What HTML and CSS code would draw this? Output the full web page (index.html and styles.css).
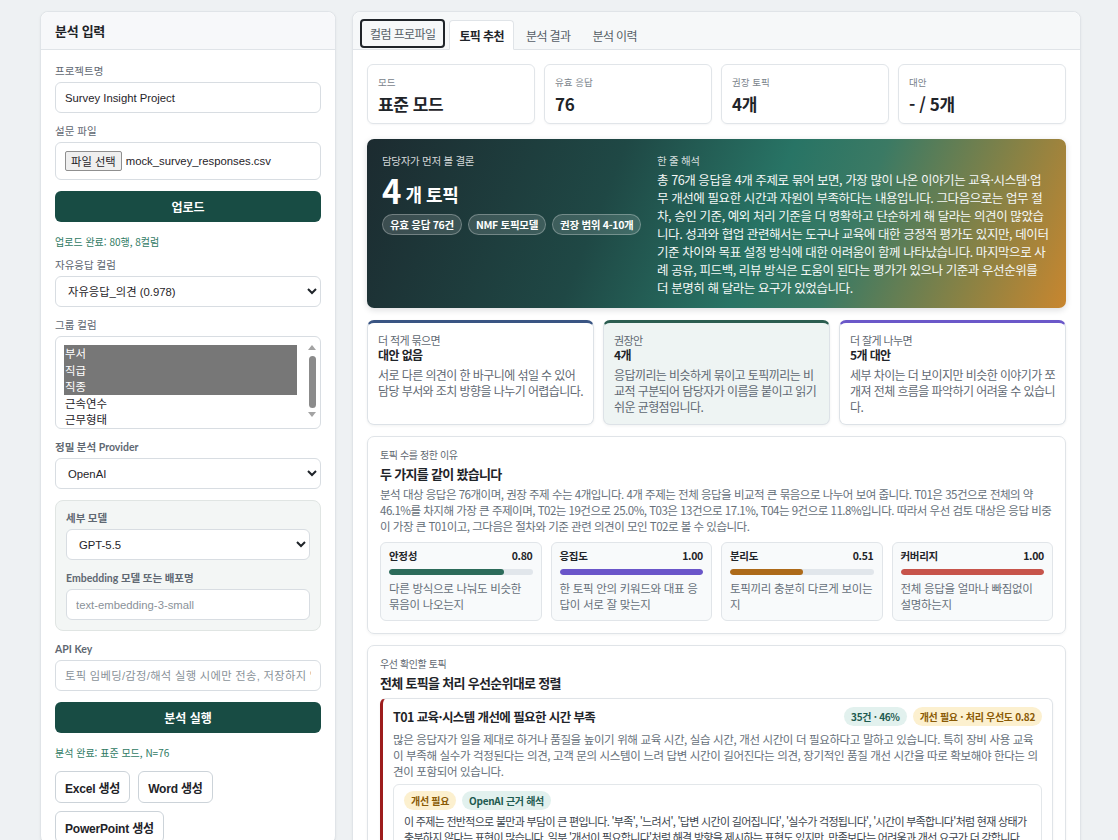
FILE: index.html
```html
<!DOCTYPE html>
<html lang="ko">
<head>
    <meta charset="UTF-8">
    <meta name="viewport" content="width=device-width, initial-scale=1.0">
    <title>Survey Insight</title>
    <link rel="stylesheet" href="styles.css">
</head>
<body>
<div class="app">
    <aside class="panel side">
        <div class="panel-head">분석 입력</div>
        <div class="side-body">
            <div class="field">
                <label class="field-label">프로젝트명</label>
                <input class="input" type="text" value="Survey Insight Project">
            </div>
            <div class="field">
                <label class="field-label">설문 파일</label>
                <div class="file-box">
                    <span class="file-btn">파일 선택</span>
                    <span class="file-name">mock_survey_responses.csv</span>
                </div>
            </div>
            <button class="btn-primary">업로드</button>
            <p class="status">업로드 완료: 80행, 8컬럼</p>
            <div class="field">
                <label class="field-label">자유응답 컬럼</label>
                <select class="input select">
                    <option>자유응답_의견 (0.978)</option>
                </select>
            </div>
            <div class="field">
                <label class="field-label">그룹 컬럼</label>
                <div class="input listbox" role="listbox">
                    <div class="list-items">
                        <div class="list-item selected">부서</div>
                        <div class="list-item selected">직급</div>
                        <div class="list-item selected">직종</div>
                        <div class="list-item">근속연수</div>
                        <div class="list-item">근무형태</div>
                    </div>
                    <div class="scroll-track">
                        <span class="arrow up"></span>
                        <span class="thumb"></span>
                        <span class="arrow down"></span>
                    </div>
                </div>
            </div>
            <div class="field">
                <label class="field-label strong">정밀 분석 Provider</label>
                <select class="input select">
                    <option>OpenAI</option>
                </select>
            </div>
            <div class="sub-box">
                <div class="field">
                    <label class="field-label strong">세부 모델</label>
                    <select class="input select">
                        <option>GPT-5.5</option>
                    </select>
                </div>
                <div class="field">
                    <label class="field-label strong">Embedding 모델 또는 배포명</label>
                    <input class="input" type="text" placeholder="text-embedding-3-small">
                </div>
            </div>
            <div class="field">
                <label class="field-label strong">API Key</label>
                <input class="input key" type="text" placeholder="토픽 임베딩/감정/해석 실행 시에만 전송, 저장하지 않음">
            </div>
            <button class="btn-primary">분석 실행</button>
            <p class="status">분석 완료: 표준 모드, N=76</p>
            <div class="export-row">
                <button class="btn-light">Excel 생성</button>
                <button class="btn-light">Word 생성</button>
                <button class="btn-light">PowerPoint 생성</button>
            </div>
        </div>
    </aside>

    <main class="panel main">
        <nav class="tabs">
            <span class="tab focused">컬럼 프로파일</span>
            <span class="tab active">토픽 추천</span>
            <span class="tab">분석 결과</span>
            <span class="tab">분석 이력</span>
        </nav>

        <div class="main-body">
            <div class="stats">
                <div class="stat"><span class="stat-label">모드</span><strong class="stat-value">표준 모드</strong></div>
                <div class="stat"><span class="stat-label">유효 응답</span><strong class="stat-value">76</strong></div>
                <div class="stat"><span class="stat-label">권장 토픽</span><strong class="stat-value">4개</strong></div>
                <div class="stat"><span class="stat-label">대안</span><strong class="stat-value">- / 5개</strong></div>
            </div>

            <section class="hero">
                <div class="hero-left">
                    <p class="hero-label">담당자가 먼저 볼 결론</p>
                    <p class="hero-count"><span class="big">4</span> 개 토픽</p>
                    <div class="pills">
                        <span class="pill">유효 응답 76건</span>
                        <span class="pill">NMF 토픽모델</span>
                        <span class="pill">권장 범위 4-10개</span>
                    </div>
                </div>
                <div class="hero-right">
                    <p class="hero-label">한 줄 해석</p>
                    <p class="hero-text">총 76개 응답을 4개 주제로 묶어 보면, 가장 많이 나온 이야기는 교육·시스템·업무 개선에 필요한 시간과 자원이 부족하다는 내용입니다. 그다음으로는 업무 절차, 승인 기준, 예외 처리 기준을 더 명확하고 단순하게 해 달라는 의견이 많았습니다. 성과와 협업 관련해서는 도구나 교육에 대한 긍정적 평가도 있지만, 데이터 기준 차이와 목표 설정 방식에 대한 어려움이 함께 나타났습니다. 마지막으로 사례 공유, 피드백, 리뷰 방식은 도움이 된다는 평가가 있으나 기준과 우선순위를 더 분명히 해 달라는 요구가 있었습니다.</p>
                </div>
            </section>

            <div class="options">
                <div class="option fewer">
                    <p class="option-label">더 적게 묶으면</p>
                    <p class="option-title">대안 없음</p>
                    <p class="option-text">서로 다른 의견이 한 바구니에 섞일 수 있어 담당 부서와 조치 방향을 나누기 어렵습니다.</p>
                </div>
                <div class="option pick">
                    <p class="option-label">권장안</p>
                    <p class="option-title">4개</p>
                    <p class="option-text">응답끼리는 비슷하게 묶이고 토픽끼리는 비교적 구분되어 담당자가 이름을 붙이고 읽기 쉬운 균형점입니다.</p>
                </div>
                <div class="option more">
                    <p class="option-label">더 잘게 나누면</p>
                    <p class="option-title">5개 대안</p>
                    <p class="option-text">세부 차이는 더 보이지만 비슷한 이야기가 쪼개져 전체 흐름을 파악하기 어려울 수 있습니다.</p>
                </div>
            </div>

            <section class="card">
                <p class="card-label">토픽 수를 정한 이유</p>
                <h3 class="card-title">두 가지를 같이 봤습니다</h3>
                <p class="card-text">분석 대상 응답은 76개이며, 권장 주제 수는 4개입니다. 4개 주제는 전체 응답을 비교적 큰 묶음으로 나누어 보여 줍니다. T01은 35건으로 전체의 약 46.1%를 차지해 가장 큰 주제이며, T02는 19건으로 25.0%, T03은 13건으로 17.1%, T04는 9건으로 11.8%입니다. 따라서 우선 검토 대상은 응답 비중이 가장 큰 T01이고, 그다음은 절차와 기준 관련 의견이 모인 T02로 볼 수 있습니다.</p>
                <div class="metrics">
                    <div class="metric">
                        <div class="metric-head"><span>안정성</span><span>0.80</span></div>
                        <div class="bar"><div class="fill green" style="width: 80%"></div></div>
                        <p class="metric-text">다른 방식으로 나눠도 비슷한 묶음이 나오는지</p>
                    </div>
                    <div class="metric">
                        <div class="metric-head"><span>응집도</span><span>1.00</span></div>
                        <div class="bar"><div class="fill purple" style="width: 100%"></div></div>
                        <p class="metric-text">한 토픽 안의 키워드와 대표 응답이 서로 잘 맞는지</p>
                    </div>
                    <div class="metric">
                        <div class="metric-head"><span>분리도</span><span>0.51</span></div>
                        <div class="bar"><div class="fill brown" style="width: 51%"></div></div>
                        <p class="metric-text">토픽끼리 충분히 다르게 보이는지</p>
                    </div>
                    <div class="metric">
                        <div class="metric-head"><span>커버리지</span><span>1.00</span></div>
                        <div class="bar"><div class="fill red" style="width: 100%"></div></div>
                        <p class="metric-text">전체 응답을 얼마나 빠짐없이 설명하는지</p>
                    </div>
                </div>
            </section>

            <section class="card">
                <p class="card-label">우선 확인할 토픽</p>
                <h3 class="card-title">전체 토픽을 처리 우선순위대로 정렬</h3>
                <div class="topic">
                    <div class="topic-head">
                        <h4 class="topic-title">T01 교육·시스템 개선에 필요한 시간 부족</h4>
                        <div class="badges">
                            <span class="badge teal">35건 · 46%</span>
                            <span class="badge amber">개선 필요 · 처리 우선도 0.82</span>
                        </div>
                    </div>
                    <p class="topic-text">많은 응답자가 일을 제대로 하거나 품질을 높이기 위해 교육 시간, 실습 시간, 개선 시간이 더 필요하다고 말하고 있습니다. 특히 장비 사용 교육이 부족해 실수가 걱정된다는 의견, 고객 문의 시스템이 느려 답변 시간이 길어진다는 의견, 장기적인 품질 개선 시간을 따로 확보해야 한다는 의견이 포함되어 있습니다.</p>
                    <div class="evidence">
                        <div class="badges">
                            <span class="badge amber">개선 필요</span>
                            <span class="badge teal">OpenAI 근거 해석</span>
                        </div>
                        <p class="evidence-text">이 주제는 전반적으로 불만과 부담이 큰 편입니다. '부족', '느려서', '답변 시간이 길어집니다', '실수가 걱정됩니다', '시간이 부족합니다'처럼 현재 상태가 충분하지 않다는 표현이 많습니다. 일부 '개선이 필요합니다'처럼 해결 방향을 제시하는 표현도 있지만, 만족보다는 어려움과 개선 요구가 더 강합니다.</p>
                    </div>
                </div>
            </section>
        </div>
    </main>
</div>
</body>
</html>
```

FILE: styles.css
```css
*,
::before,
::after {
  margin: 0;
  padding: 0;
  box-sizing: border-box;
}

body {
  background: #eef1f3;
  font-family: "Noto Sans CJK KR", "Noto Sans", sans-serif;
  color: #1f2429;
  font-size: 12px;
}

.app {
  display: grid;
  grid-template-columns: 296px 729px;
  gap: 16px;
  padding: 11px 0 0 40px;
  align-items: start;
}

.panel {
  background: #fff;
  border: 1px solid #e0e4e8;
  border-radius: 8px;
  box-shadow: 0 1px 3px rgba(20, 30, 40, 0.05);
}

/* left column */
.panel-head {
  height: 38px;
  padding: 0 14px;
  display: flex;
  align-items: center;
  background: #f7f8fa;
  border-bottom: 1px solid #e0e4e8;
  border-radius: 8px 8px 0 0;
  font-size: 13px;
  font-weight: 700;
  letter-spacing: -0.3px;
}

.side-body {
  padding: 14px 14px 0;
  display: flex;
  flex-direction: column;
  gap: 11px;
}

.field {
  display: flex;
  flex-direction: column;
}

.field-label {
  font-size: 10.5px;
  line-height: 14px;
  margin-bottom: 4px;
  color: #5f6872;
}

.field-label.strong {
  font-family: "Lato", "Noto Sans CJK KR", sans-serif;
  font-weight: 700;
}

.input {
  height: 31px;
  width: 100%;
  border: 1px solid #d8dde2;
  border-radius: 6px;
  background: #fff;
  padding: 0 9px;
  font-family: "Liberation Sans", "Noto Sans CJK KR", sans-serif;
  font-size: 11.3px;
  color: #1f2429;
}

.input::placeholder {
  color: #8a9299;
}

.input.key::placeholder {
  letter-spacing: 0.3px;
}

.select {
  padding-left: 8px;
}

/* multi-select list with its scrollbar */
.listbox {
  height: 93px;
  padding: 8px 3px 8px 8px;
  display: flex;
  gap: 10px;
  font-family: "Noto Sans CJK KR", sans-serif;
  font-size: 11.4px;
  overflow: hidden;
}

.list-items {
  flex: 1;
}

.list-item {
  line-height: 16.5px;
  padding: 0 1px;
}

.list-item.selected {
  background: #777;
  color: #fff;
}

.scroll-track {
  width: 10px;
  display: flex;
  flex-direction: column;
  align-items: center;
  margin-top: -3px;
}

.arrow {
  width: 0;
  height: 0;
  border-left: 4px solid transparent;
  border-right: 4px solid transparent;
  margin: 3px 0;
}

.arrow.up {
  border-bottom: 5px solid #a3a3a3;
}

.arrow.down {
  border-top: 5px solid #a3a3a3;
  margin-top: auto;
}

.thumb {
  width: 7px;
  height: 52px;
  margin-top: 3px;
  border-radius: 4px;
  background: #8b8b8b;
}

.file-box {
  height: 38px;
  border: 1px solid #d8dde2;
  border-radius: 6px;
  display: flex;
  align-items: center;
  padding: 0 9px;
  font-family: "Liberation Sans", "Noto Sans CJK KR", sans-serif;
  font-size: 11.3px;
}

.file-btn {
  background: #efefef;
  border: 1px solid #8f8f8f;
  border-radius: 2px;
  padding: 1px 5px;
  font-family: "Noto Sans CJK KR", sans-serif;
  font-size: 11.3px;
  line-height: 16px;
  margin-right: 4px;
}

.btn-primary {
  height: 31px;
  border: 0;
  border-radius: 6px;
  background: #184c44;
  color: #fff;
  font-family: "Noto Sans CJK KR", sans-serif;
  font-weight: 700;
  font-size: 12px;
}

.status {
  font-size: 10px;
  line-height: 14px;
  color: #2f7a63;
  margin: 2px 0 -2px;
}

.sub-box {
  background: #f3f6f5;
  border: 1px solid #e0e5e3;
  border-radius: 8px;
  padding: 10px;
  display: flex;
  flex-direction: column;
  gap: 11px;
}

.export-row {
  display: flex;
  flex-wrap: wrap;
  gap: 8px;
  margin-top: 2px;
}

.btn-light {
  height: 32px;
  padding: 0 9px;
  background: #fff;
  border: 1px solid #ccd3d9;
  border-radius: 6px;
  font-family: "Liberation Sans", "Noto Sans CJK KR", sans-serif;
  font-weight: 700;
  font-size: 12px;
  letter-spacing: -0.2px;
  color: #1f2429;
}

/* right column */
.tabs {
  height: 38px;
  display: flex;
  align-items: flex-end;
  gap: 2px;
  padding: 0 7px;
  background: #f6f8f9;
  border-bottom: 1px solid #e0e4e8;
  border-radius: 8px 8px 0 0;
}

.tab {
  height: 30px;
  padding: 0 9px;
  display: flex;
  align-items: center;
  font-size: 12px;
  letter-spacing: -0.6px;
  color: #555e66;
  border: 1px solid transparent;
  border-radius: 4px 4px 0 0;
  margin-bottom: -1px;
}

.tab.focused {
  border: 2px solid #1f2429;
  border-radius: 4px;
  margin-bottom: 1px;
  margin-right: 2px;
  height: 29px;
  padding: 0 8px;
  background: #f6f8f9;
}

.tab.active {
  background: #fff;
  border-color: #e0e4e8;
  border-bottom-color: #fff;
  font-weight: 700;
  color: #1f2429;
}

.main-body {
  padding: 14px 14px 0;
}

.stats {
  display: grid;
  grid-template-columns: repeat(4, 1fr);
  gap: 9px;
}

.stat {
  height: 60px;
  border: 1px solid #e1e5e9;
  border-radius: 6px;
  padding: 11px 10px 0;
  display: flex;
  flex-direction: column;
  box-shadow: 0 1px 2px rgba(20, 30, 40, 0.04);
}

.stat-label {
  font-size: 9.5px;
  line-height: 13px;
  color: #7a838b;
}

.stat-value {
  font-size: 17px;
  line-height: 24px;
  margin-top: 3px;
  letter-spacing: -0.4px;
}

.hero {
  margin-top: 15px;
  height: 169px;
  border-radius: 7px;
  padding: 15px;
  display: grid;
  grid-template-columns: 260px 1fr;
  gap: 15px;
  color: #fff;
  background: linear-gradient(112deg, #1c2b30 0%, #1f4845 34%, #287465 56%, #3b7a64 68%, #8a8244 86%, #c8862f 100%);
  box-shadow: 0 2px 6px rgba(20, 30, 40, 0.15);
}

.hero-label {
  font-size: 10.5px;
  line-height: 14px;
  color: rgba(255, 255, 255, 0.82);
  letter-spacing: -0.3px;
}

.hero-count {
  font-size: 18px;
  font-weight: 700;
  line-height: 36px;
  margin-top: 4px;
  letter-spacing: -0.5px;
}

.hero-count .big {
  font-size: 33px;
  vertical-align: -2px;
}

.pills {
  display: flex;
  gap: 6px;
  margin-top: 2px;
}

.pill {
  padding: 0 7px;
  height: 21px;
  display: flex;
  align-items: center;
  border-radius: 11px;
  background: rgba(255, 255, 255, 0.14);
  border: 1px solid rgba(255, 255, 255, 0.28);
  font-size: 10.5px;
  font-weight: 700;
  letter-spacing: -0.3px;
}

.hero-text {
  margin-top: 3px;
  font-size: 12.5px;
  line-height: 18px;
  letter-spacing: -0.42px;
  color: #f4f7f6;
}

.options {
  margin-top: 12px;
  display: grid;
  grid-template-columns: repeat(3, 1fr);
  gap: 9px;
}

.option {
  height: 105px;
  border: 1px solid #dde2e7;
  border-top: 3px solid #3a5583;
  border-radius: 7px;
  padding: 10px 8px 0 10px;
  box-shadow: 0 1px 3px rgba(20, 30, 40, 0.06);
}

.option.pick {
  border-top-color: #2b5d50;
  background: #eef4f3;
}

.option.more {
  border-top-color: #6b58c9;
}

.option-label {
  font-size: 11px;
  line-height: 14px;
  color: #5f6872;
  letter-spacing: -0.6px;
}

.option-title {
  font-size: 12px;
  line-height: 16px;
  font-weight: 700;
  letter-spacing: -0.6px;
}

.option-text {
  margin-top: 4px;
  font-size: 12px;
  line-height: 16px;
  color: #5f6872;
  letter-spacing: -0.58px;
}

.card {
  margin-top: 11px;
  border: 1px solid #e0e4e8;
  border-radius: 7px;
  padding: 11px 12px 12px;
  box-shadow: 0 1px 3px rgba(20, 30, 40, 0.05);
}

.card-label {
  font-size: 10px;
  line-height: 14px;
  color: #5f6872;
  letter-spacing: -0.4px;
}

.card-title {
  margin-top: 3px;
  font-size: 13px;
  line-height: 18px;
  letter-spacing: -0.7px;
}

.card-text {
  margin-top: 3px;
  font-size: 11.5px;
  line-height: 16px;
  color: #66707a;
  letter-spacing: -0.5px;
}

.metrics {
  margin-top: 8px;
  display: grid;
  grid-template-columns: repeat(4, 1fr);
  gap: 9px;
}

.metric {
  height: 79px;
  border: 1px solid #e1e5e9;
  border-radius: 6px;
  background: #f8fafb;
  padding: 6px 8px 0;
}

.metric-head {
  display: flex;
  justify-content: space-between;
  font-size: 10.5px;
  line-height: 14px;
  font-weight: 700;
  letter-spacing: -0.3px;
}

.bar {
  margin-top: 6px;
  height: 6px;
  border-radius: 3px;
  background: #e1e6eb;
  overflow: hidden;
}

.fill {
  height: 100%;
  border-radius: 3px;
}

.fill.green { background: #2c6b5a; }
.fill.purple { background: #6a55c9; }
.fill.brown { background: #ad6a19; }
.fill.red { background: #c7544b; }

.metric-text {
  margin-top: 5px;
  font-size: 11.5px;
  line-height: 16px;
  color: #66707a;
  letter-spacing: -0.3px;
}

.topic {
  margin-top: 6px;
  border: 1px solid #e0e4e8;
  border-left: 3px solid #9d1d1d;
  border-radius: 6px;
  padding: 8px 10px 0 10px;
  box-shadow: 0 1px 3px rgba(20, 30, 40, 0.05);
}

.topic-head {
  display: flex;
  justify-content: space-between;
  align-items: center;
}

.topic-title {
  font-size: 12.5px;
  line-height: 18px;
  letter-spacing: -0.6px;
}

.badges {
  display: flex;
  gap: 6px;
}

.badge {
  height: 19px;
  padding: 0 7px;
  display: flex;
  align-items: center;
  border-radius: 10px;
  font-size: 10px;
  font-weight: 700;
  letter-spacing: -0.3px;
}

.badge.teal {
  background: #e2f1ee;
  color: #1e5b50;
}

.badge.amber {
  background: #fcf0cf;
  color: #8a5a05;
}

.topic-text {
  margin-top: 5px;
  font-size: 11.5px;
  line-height: 16px;
  color: #66707a;
  letter-spacing: -0.37px;
}

.evidence {
  margin-top: 5px;
  border: 1px solid #e3e7ea;
  border-radius: 6px;
  padding: 6px 10px;
}

.evidence-text {
  margin-top: 3px;
  font-size: 11px;
  line-height: 16px;
  color: #3c454d;
  letter-spacing: -0.7px;
}
```
